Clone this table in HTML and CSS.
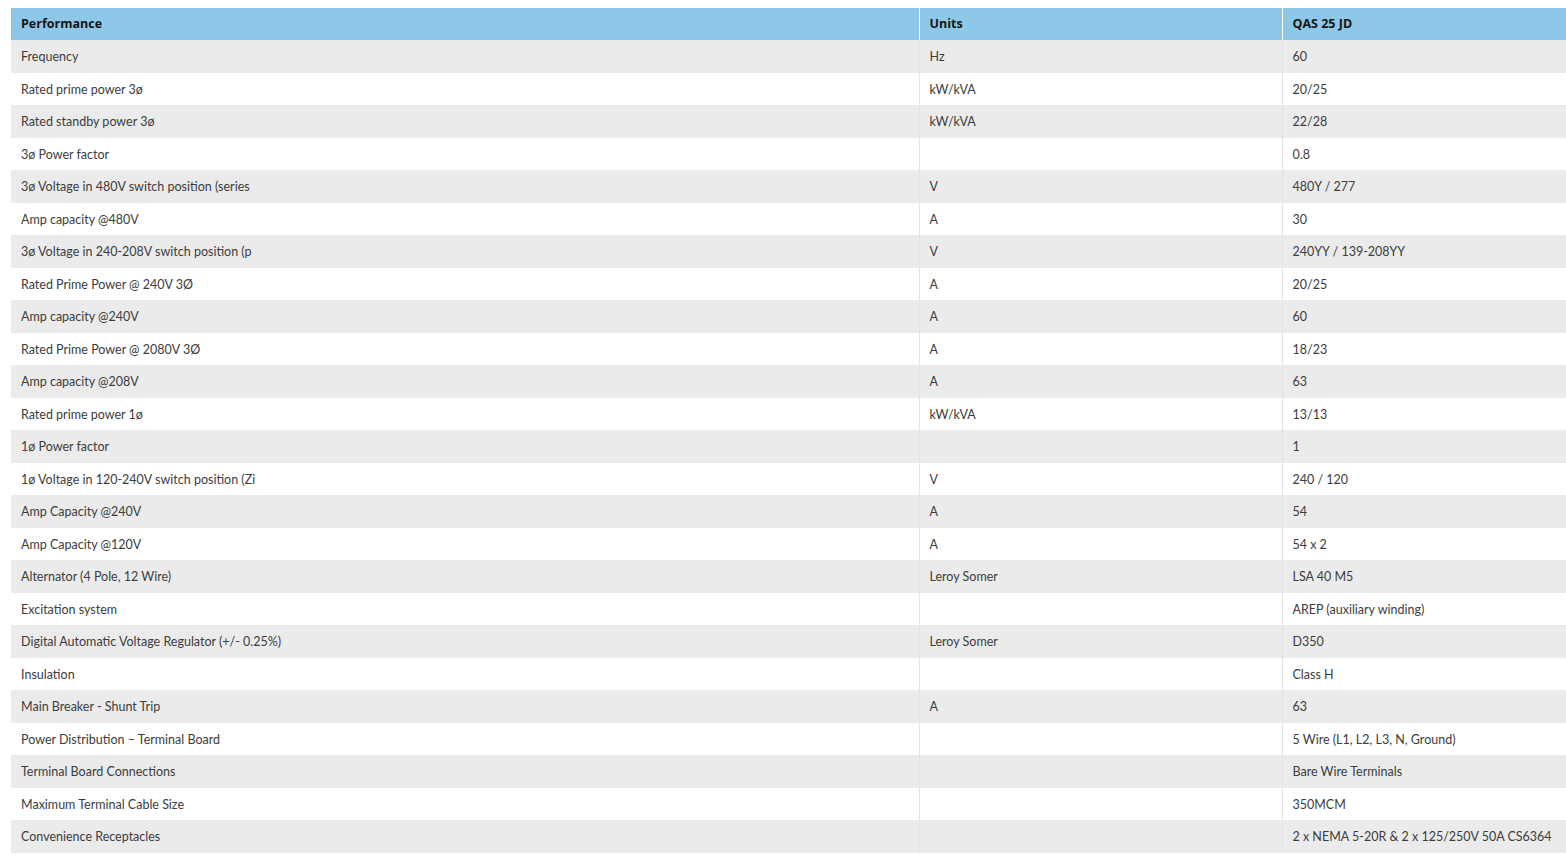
FILE: index.html
```html
<!DOCTYPE html>
<html>
<head>
<meta charset="utf-8">
<link rel="stylesheet" href="styles.css">
</head>
<body>
<table class="spec">
<colgroup><col class="c1"><col class="c2"><col class="c3"></colgroup>
<thead>
<tr><th>Performance</th><th>Units</th><th>QAS 25 JD</th></tr>
</thead>
<tbody>
<tr><td>Frequency</td><td>Hz</td><td>60</td></tr>
<tr><td>Rated prime power 3ø</td><td>kW/kVA</td><td>20/25</td></tr>
<tr><td>Rated standby power 3ø</td><td>kW/kVA</td><td>22/28</td></tr>
<tr><td>3ø Power factor</td><td></td><td>0.8</td></tr>
<tr><td>3ø Voltage in 480V switch position (series</td><td>V</td><td>480Y / 277</td></tr>
<tr><td>Amp capacity @480V</td><td>A</td><td>30</td></tr>
<tr><td>3ø Voltage in 240-208V switch position (p</td><td>V</td><td>240YY / 139-208YY</td></tr>
<tr><td>Rated Prime Power @ 240V 3Ø</td><td>A</td><td>20/25</td></tr>
<tr><td>Amp capacity @240V</td><td>A</td><td>60</td></tr>
<tr><td>Rated Prime Power @ 2080V 3Ø</td><td>A</td><td>18/23</td></tr>
<tr><td>Amp capacity @208V</td><td>A</td><td>63</td></tr>
<tr><td>Rated prime power 1ø</td><td>kW/kVA</td><td>13/13</td></tr>
<tr><td>1ø Power factor</td><td></td><td>1</td></tr>
<tr><td>1ø Voltage in 120-240V switch position (Zi</td><td>V</td><td>240 / 120</td></tr>
<tr><td>Amp Capacity @240V</td><td>A</td><td>54</td></tr>
<tr><td>Amp Capacity @120V</td><td>A</td><td>54 x 2</td></tr>
<tr><td>Alternator (4 Pole, 12 Wire)</td><td>Leroy Somer</td><td>LSA 40 M5</td></tr>
<tr><td>Excitation system</td><td></td><td>AREP (auxiliary winding)</td></tr>
<tr><td>Digital Automatic Voltage Regulator (+/- 0.25%)</td><td>Leroy Somer</td><td>D350</td></tr>
<tr><td>Insulation</td><td></td><td>Class H</td></tr>
<tr><td>Main Breaker - Shunt Trip</td><td>A</td><td>63</td></tr>
<tr><td>Power Distribution – Terminal Board</td><td></td><td>5 Wire (L1, L2, L3, N, Ground)</td></tr>
<tr><td>Terminal Board Connections</td><td></td><td>Bare Wire Terminals</td></tr>
<tr><td>Maximum Terminal Cable Size</td><td></td><td>350MCM</td></tr>
<tr><td>Convenience Receptacles</td><td></td><td>2 x NEMA 5-20R &amp; 2 x 125/250V 50A CS6364</td></tr>
</tbody>
</table>
</body>
</html>
```
FILE: styles.css
```css
html, body {
  margin: 0;
  padding: 0;
  background: #ffffff;
  overflow: hidden;
}
body {
  padding: 8px 0 0 11px;
  font-family: "Lato", "Liberation Sans", sans-serif;
  font-size: 12.5px;
  color: #3c3c3c;
}
.spec {
  width: 1555px;
  border-collapse: collapse;
  table-layout: fixed;
}
.c1 { width: 908px; }
.c2 { width: 363px; }
.spec th,
.spec td {
  text-align: left;
  padding: 8px 10px 6px;
  line-height: 18.5px;
  border-left: 1px solid #e4e4e4;
  white-space: nowrap;
  overflow: hidden;
}
.spec th:first-child,
.spec td:first-child {
  border-left: none;
}
.spec th {
  background: #8ec8e8;
  color: #151515;
  font-family: "Open Sans", "Lato", sans-serif;
  font-weight: 700;
  font-size: 12.5px;
  line-height: 18px;
  padding: 7px 10px;
  border-left-color: #ffffff;
}
.spec tbody tr:nth-child(odd) td {
  background: #ebebeb;
}
.spec tbody tr:nth-child(even) td {
  background: #ffffff;
}
```
